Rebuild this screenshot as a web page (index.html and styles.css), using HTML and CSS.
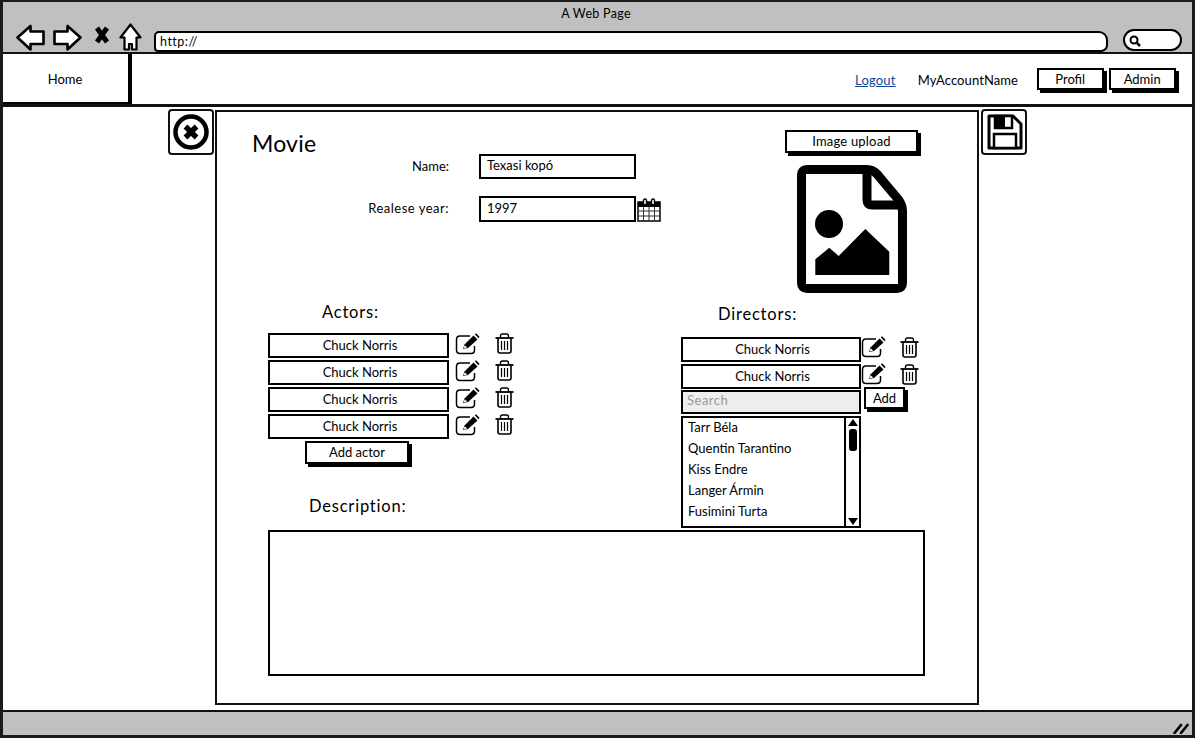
FILE: index.html
```html
<!DOCTYPE html>
<html lang="en">
<head>
<meta charset="utf-8">
<title>A Web Page</title>
<link rel="stylesheet" href="styles.css">
</head>
<body>
<svg class="defs" width="0" height="0" aria-hidden="true">
  <defs>
    <symbol id="pencil" viewBox="0 0 25 22">
      <path d="M15 3H5Q1.500 3 1.500 6.500V17Q1.500 20.500 5 20.500H16Q19.500 20.500 19.500 17V13" fill="none" stroke="#000" stroke-width="1.500"/>
      <path d="M8 16L9.500 11.500L18.500 2.500L22.500 6.500L13 15Z" fill="#000"/>
      <path d="M19.800 1.200L21 0.300L24.500 3.800L23.500 5.200Z" fill="#000"/>
      <path d="M9.800 12.200L12.200 14.500L8.600 15.600Z" fill="#fff"/>
    </symbol>
    <symbol id="trash" viewBox="0 0 19 21">
      <path d="M0.500 5H18.500" stroke="#000" stroke-width="1.800" fill="none"/>
      <path d="M5.500 4.500V3Q5.500 1 7.500 1H11.500Q13.500 1 13.500 3V4.500" stroke="#000" stroke-width="1.400" fill="none"/>
      <path d="M3 5V18Q3 20 5 20H14Q16 20 16 18V5" stroke="#000" stroke-width="1.600" fill="none"/>
      <path d="M6.500 8V17M9.500 8V17M12.500 8V17" stroke="#000" stroke-width="1.200" fill="none"/>
    </symbol>
  </defs>
</svg>
<div class="window">
  <header class="chrome">
    <div class="chrome-title">A Web Page</div>
    <div class="toolbar">
      <svg class="ic-arrow" viewBox="0 0 29 27"><path d="M1.500 13.500L14.500 2V7.500H27.500V20H14.500V25.500Z" fill="#fff" stroke="#000" stroke-width="2.600" stroke-linejoin="round"/></svg>
      <svg class="ic-arrow ic-forward" viewBox="0 0 29 27"><path d="M27.500 13.500L14.500 2V7.500H1.500V20H14.500V25.500Z" fill="#fff" stroke="#000" stroke-width="2.600" stroke-linejoin="round"/></svg>
      <svg class="ic-stop" viewBox="0 0 16 18"><path d="M3 2L13 16M13 2L3 16" stroke="#000" stroke-width="5" fill="none"/></svg>
      <svg class="ic-home" viewBox="0 0 23 28"><path d="M11.500 1.500L1.500 14.500H5.500V26.500H10V21H13V26.500H17.500V14.500H21.500Z" fill="#fff" stroke="#000" stroke-width="2.200" stroke-linejoin="round"/></svg>
      <div class="url">http://</div>
      <div class="search-pill">
        <svg class="ic-lens" viewBox="0 0 12 12"><circle cx="5" cy="5" r="3.500" fill="none" stroke="#000" stroke-width="2"/><path d="M8 8L11 11" stroke="#000" stroke-width="2.500"/></svg>
      </div>
    </div>
  </header>
  <nav class="nav">
    <div class="home-tab">Home</div>
    <div class="nav-right">
      <a class="logout" href="#">Logout</a>
      <span class="account">MyAccountName</span>
      <button class="btn nav-btn">Profil</button>
      <button class="btn nav-btn">Admin</button>
    </div>
  </nav>
  <main class="content">
    <div class="gutter gutter-left">
      <div class="icon-box">
        <svg class="ic-box" viewBox="0 0 40 40"><circle cx="20" cy="20" r="15.500" fill="none" stroke="#000" stroke-width="4.500"/><path d="M14.500 14.500L25.500 25.500M25.500 14.500L14.500 25.500" stroke="#000" stroke-width="5.500" fill="none"/></svg>
      </div>
    </div>
    <section class="panel">
      <div class="top">
        <div class="form">
          <h1 class="title">Movie</h1>
          <div class="field">
            <label class="field-label field-label-name">Name:</label>
            <div class="input">Texasi kopó</div>
          </div>
          <div class="field field-year">
            <label class="field-label">Realese year:</label>
            <div class="input input-tall">1997</div>
            <svg class="ic-cal" viewBox="0 0 24 24">
              <rect x="1" y="4" width="22" height="19" fill="#fff" stroke="#000" stroke-width="1.500"/>
              <rect x="1" y="4" width="22" height="5" fill="#000"/>
              <path d="M1 13H23M1 18H23M6.500 9V23M12 9V23M17.500 9V23" stroke="#333" stroke-width="1" fill="none"/>
              <path d="M6.500 6V2.500Q6.500 1 8 1T9.500 2.500V6M14.500 6V2.500Q14.500 1 16 1T17.500 2.500V6" stroke="#000" stroke-width="1.400" fill="#fff"/>
            </svg>
          </div>
        </div>
        <div class="upload">
          <button class="btn upload-btn">Image upload</button>
          <svg class="ic-image" viewBox="0 0 110 128">
            <path d="M10 4.500H70Q76 4.500 80 9L101 34Q105.500 40 105.500 46V118Q105.500 123.500 100 123.500H10Q4.500 123.500 4.500 118V10Q4.500 4.500 10 4.500Z" fill="#fff" stroke="#000" stroke-width="9"/>
            <path d="M70 4.500V35Q70 40 75 40H105.500" fill="none" stroke="#000" stroke-width="9"/>
            <circle cx="32" cy="59" r="14"/>
            <path d="M18.300 110V94.300L32.300 82.700L41.700 91L68.300 64L92.300 86.700V110Z"/>
          </svg>
        </div>
      </div>
      <div class="middle">
        <div class="col-actors">
          <h2 class="heading heading-actors">Actors:</h2>
          <div class="rows">
            <div class="person"><div class="name">Chuck Norris</div><svg class="ic-pencil"><use href="#pencil"/></svg><svg class="ic-trash"><use href="#trash"/></svg></div>
            <div class="person"><div class="name">Chuck Norris</div><svg class="ic-pencil"><use href="#pencil"/></svg><svg class="ic-trash"><use href="#trash"/></svg></div>
            <div class="person"><div class="name">Chuck Norris</div><svg class="ic-pencil"><use href="#pencil"/></svg><svg class="ic-trash"><use href="#trash"/></svg></div>
            <div class="person"><div class="name">Chuck Norris</div><svg class="ic-pencil"><use href="#pencil"/></svg><svg class="ic-trash"><use href="#trash"/></svg></div>
          </div>
          <button class="btn add-actor">Add actor</button>
          <h2 class="heading heading-desc">Description:</h2>
        </div>
        <div class="col-directors">
          <h2 class="heading heading-directors">Directors:</h2>
          <div class="rows">
            <div class="person person-dir"><div class="name">Chuck Norris</div><svg class="ic-pencil"><use href="#pencil"/></svg><svg class="ic-trash"><use href="#trash"/></svg></div>
            <div class="person person-dir"><div class="name">Chuck Norris</div><svg class="ic-pencil"><use href="#pencil"/></svg><svg class="ic-trash"><use href="#trash"/></svg></div>
          </div>
          <div class="search-row">
            <div class="search-input">Search</div>
            <button class="btn add-btn">Add</button>
          </div>
          <div class="listbox">
            <ul class="items">
              <li>Tarr Béla</li>
              <li>Quentin Tarantino</li>
              <li>Kiss Endre</li>
              <li>Langer Ármin</li>
              <li>Fusimini Turta</li>
            </ul>
            <div class="scrollbar">
              <span class="arrow-up"></span>
              <span class="thumb"></span>
              <span class="arrow-down"></span>
            </div>
          </div>
        </div>
      </div>
      <div class="description"></div>
    </section>
    <div class="gutter gutter-right">
      <div class="icon-box">
        <svg class="ic-box" viewBox="0 0 40 40">
          <path d="M5 4H29L37 12V36H5Z" fill="#fff" stroke="#000" stroke-width="3" stroke-linejoin="round"/>
          <rect x="11" y="4" width="17" height="12" fill="#fff" stroke="#000" stroke-width="2.500"/>
          <rect x="11" y="4" width="10" height="12"/>
          <rect x="10" y="22" width="22" height="14" fill="#fff" stroke="#000" stroke-width="2.500"/>
        </svg>
      </div>
    </div>
  </main>
  <footer class="status">
    <svg class="ic-grip" viewBox="0 0 16 12"><path d="M1.500 11L8 3M8 11L14.500 3" stroke="#000" stroke-width="2.600" stroke-linecap="round" fill="none"/></svg>
  </footer>
</div>
</body>
</html>
```
FILE: styles.css
```css
* { box-sizing: border-box; }
html, body { margin: 0; padding: 0; background: #fff; }
body { font-family: Lato, "Liberation Sans", sans-serif; font-size: 13px; color: #000; }
.defs { position: absolute; }
.window { width: 1195px; height: 738px; border: 3px solid #1a1a1a; border-top-width: 2px; display: flex; flex-direction: column; overflow: hidden; }

.chrome { height: 52px; flex: none; background: #c0c0c0; border-bottom: 2px solid #111; }
.chrome-title { height: 21px; line-height: 23px; text-align: center; font-size: 12.500px; letter-spacing: 0.300px; padding-right: 3px; }
.toolbar { display: flex; align-items: flex-start; padding-left: 13px; }
.ic-arrow { width: 29px; height: 27px; margin-top: 1px; }
.ic-forward { margin-left: 8px; }
.ic-stop { width: 16px; height: 18px; margin: 3px 0 0 12px; }
.ic-home { width: 23px; height: 28px; margin: 0 0 0 9px; }
.url { width: 954px; height: 21px; margin: 8px 0 0 12px; padding-left: 4px; background: #fff; border: 2px solid #000; border-radius: 5px 9px 7px 4px; font-size: 12.500px; line-height: 17px; letter-spacing: 0.500px; }
.search-pill { width: 59px; height: 22px; margin: 6px 0 0 15px; padding: 4px 0 0 4px; background: #fff; border: 2px solid #000; border-radius: 11px; }
.ic-lens { display: block; width: 12px; height: 12px; }

.nav { height: 53px; flex: none; display: flex; border-bottom: 3px solid #111; }
.home-tab { width: 129px; height: 50px; line-height: 50px; padding-right: 1px; text-align: center; border-right: 4px solid #000; border-bottom: 2px solid #000; font-size: 13px; }
.nav-right { flex: 1; display: flex; align-items: flex-start; padding: 14px 0 0 723px; }
.logout { margin-top: 4px; color: #0a4a9c; font-size: 13px; letter-spacing: 0.200px; line-height: 16px; }
.account { margin: 3px 0 0 22px; width: 119px; line-height: 18px; font-size: 13px; letter-spacing: 0.100px; }
.btn { display: block; padding: 0; font: inherit; font-size: 13px; color: #000; background: #fff; border: 2px solid #000; box-shadow: 3px 3px 0 #000; }
.nav-btn { width: 67px; height: 22px; margin-right: 5px; line-height: 16px; }

.content { flex: 1; display: flex; min-height: 0; }
.gutter { flex: none; padding-top: 2px; }
.gutter-left { width: 212px; display: flex; justify-content: flex-end; padding-right: 1px; }
.gutter-right { padding-left: 2px; }
.icon-box { width: 46px; height: 46px; padding: 1px; border: 2px solid #111; border-radius: 4px; background: #fff; }
.ic-box { display: block; width: 40px; height: 40px; }

.panel { width: 764px; height: 595px; margin-top: 3px; border: 2px solid #111; flex: none; }
.top { height: 188px; display: flex; }
.form { padding: 18px 0 0 35px; }
.title { height: 24px; margin: 0; font-size: 23px; line-height: 26px; font-weight: 400; letter-spacing: 0.200px; }
.field { display: flex; align-items: flex-start; }
.field-year { margin-top: 17px; }
.field-label { width: 197px; margin-right: 30px; text-align: right; line-height: 24px; font-size: 13px; letter-spacing: 0.500px; }
.field-label-name { letter-spacing: 0; }
.input { width: 157px; height: 25px; padding-left: 6px; border: 2.500px solid #000; line-height: 19px; font-size: 13px; background: #fff; }
.input-tall { height: 26px; line-height: 20px; }
.ic-cal { width: 24px; height: 24px; margin: 2px 0 0 1px; }
.upload { margin-left: auto; margin-right: 59px; padding-top: 18px; width: 133px; }
.upload-btn { width: 133px; height: 23px; line-height: 17px; letter-spacing: 0.200px; }
.ic-image { display: block; width: 110px; height: 128px; margin: 12px 0 0 12px; }

.middle { display: flex; height: 230px; }
.col-actors { width: 464px; padding-left: 51px; }
.heading { margin: 0; height: 24px; line-height: 24px; font-size: 16.500px; font-weight: 400; letter-spacing: 0.800px; }
.heading-actors { padding-left: 54px; margin-bottom: 9px; }
.heading-desc { padding-left: 41px; margin-top: 30px; }
.heading-directors { padding-left: 37px; margin-top: 2px; margin-bottom: 11px; }
.rows { display: flex; flex-direction: column; gap: 2px; }
.person { display: flex; align-items: flex-start; height: 25px; }
.name { width: 181px; height: 25px; padding-left: 3px; border: 2px solid #000; border-top-width: 2.500px; text-align: center; line-height: 20px; font-size: 13px; background: #fff; }
.ic-pencil { width: 25px; height: 22px; margin-left: 6px; flex: none; }
.ic-trash { width: 19px; height: 21px; margin-left: 15px; flex: none; }
.person-dir .name { width: 180px; }
.person-dir .ic-pencil { margin-left: 0; margin-top: -1px; }
.person-dir .ic-trash { margin-left: 14px; }
.add-actor { width: 104px; height: 23px; margin: 2px 0 0 37px; line-height: 17px; }

.search-row { display: flex; align-items: flex-start; margin-top: -2px; }
.search-input { width: 180px; height: 24px; margin-top: 3px; padding-left: 4px; background: #eee; border: 2px solid #000; color: #999; line-height: 16px; font-size: 13px; letter-spacing: 0.500px; }
.add-btn { width: 41px; height: 22px; margin-left: 3px; line-height: 16px; }
.listbox { width: 180px; height: 112px; margin-top: 2px; display: flex; border: 2px solid #000; }
.items { flex: 1; margin: 0; padding: 0 0 0 5px; list-style: none; }
.items li { height: 21px; line-height: 19px; font-size: 13px; white-space: nowrap; }
.scrollbar { width: 15px; border-left: 2px solid #000; display: flex; flex-direction: column; align-items: center; padding: 1px 0; }
.arrow-up, .arrow-down { width: 0; height: 0; border-left: 5px solid transparent; border-right: 5px solid transparent; }
.arrow-up { border-bottom: 7px solid #000; }
.arrow-down { border-top: 7px solid #000; margin-top: auto; }
.thumb { width: 8px; height: 22px; margin-top: 3px; background: #000; border-radius: 3px; }
.description { width: 657px; height: 146px; margin: 0 0 0 51px; border: 2px solid #000; background: #fff; }

.status { flex: none; height: 25px; background: #c0c0c0; border-top: 2px solid #111; display: flex; justify-content: flex-end; align-items: flex-end; padding: 0 3px 1px 0; }
.ic-grip { display: block; width: 16px; height: 12px; }
```
